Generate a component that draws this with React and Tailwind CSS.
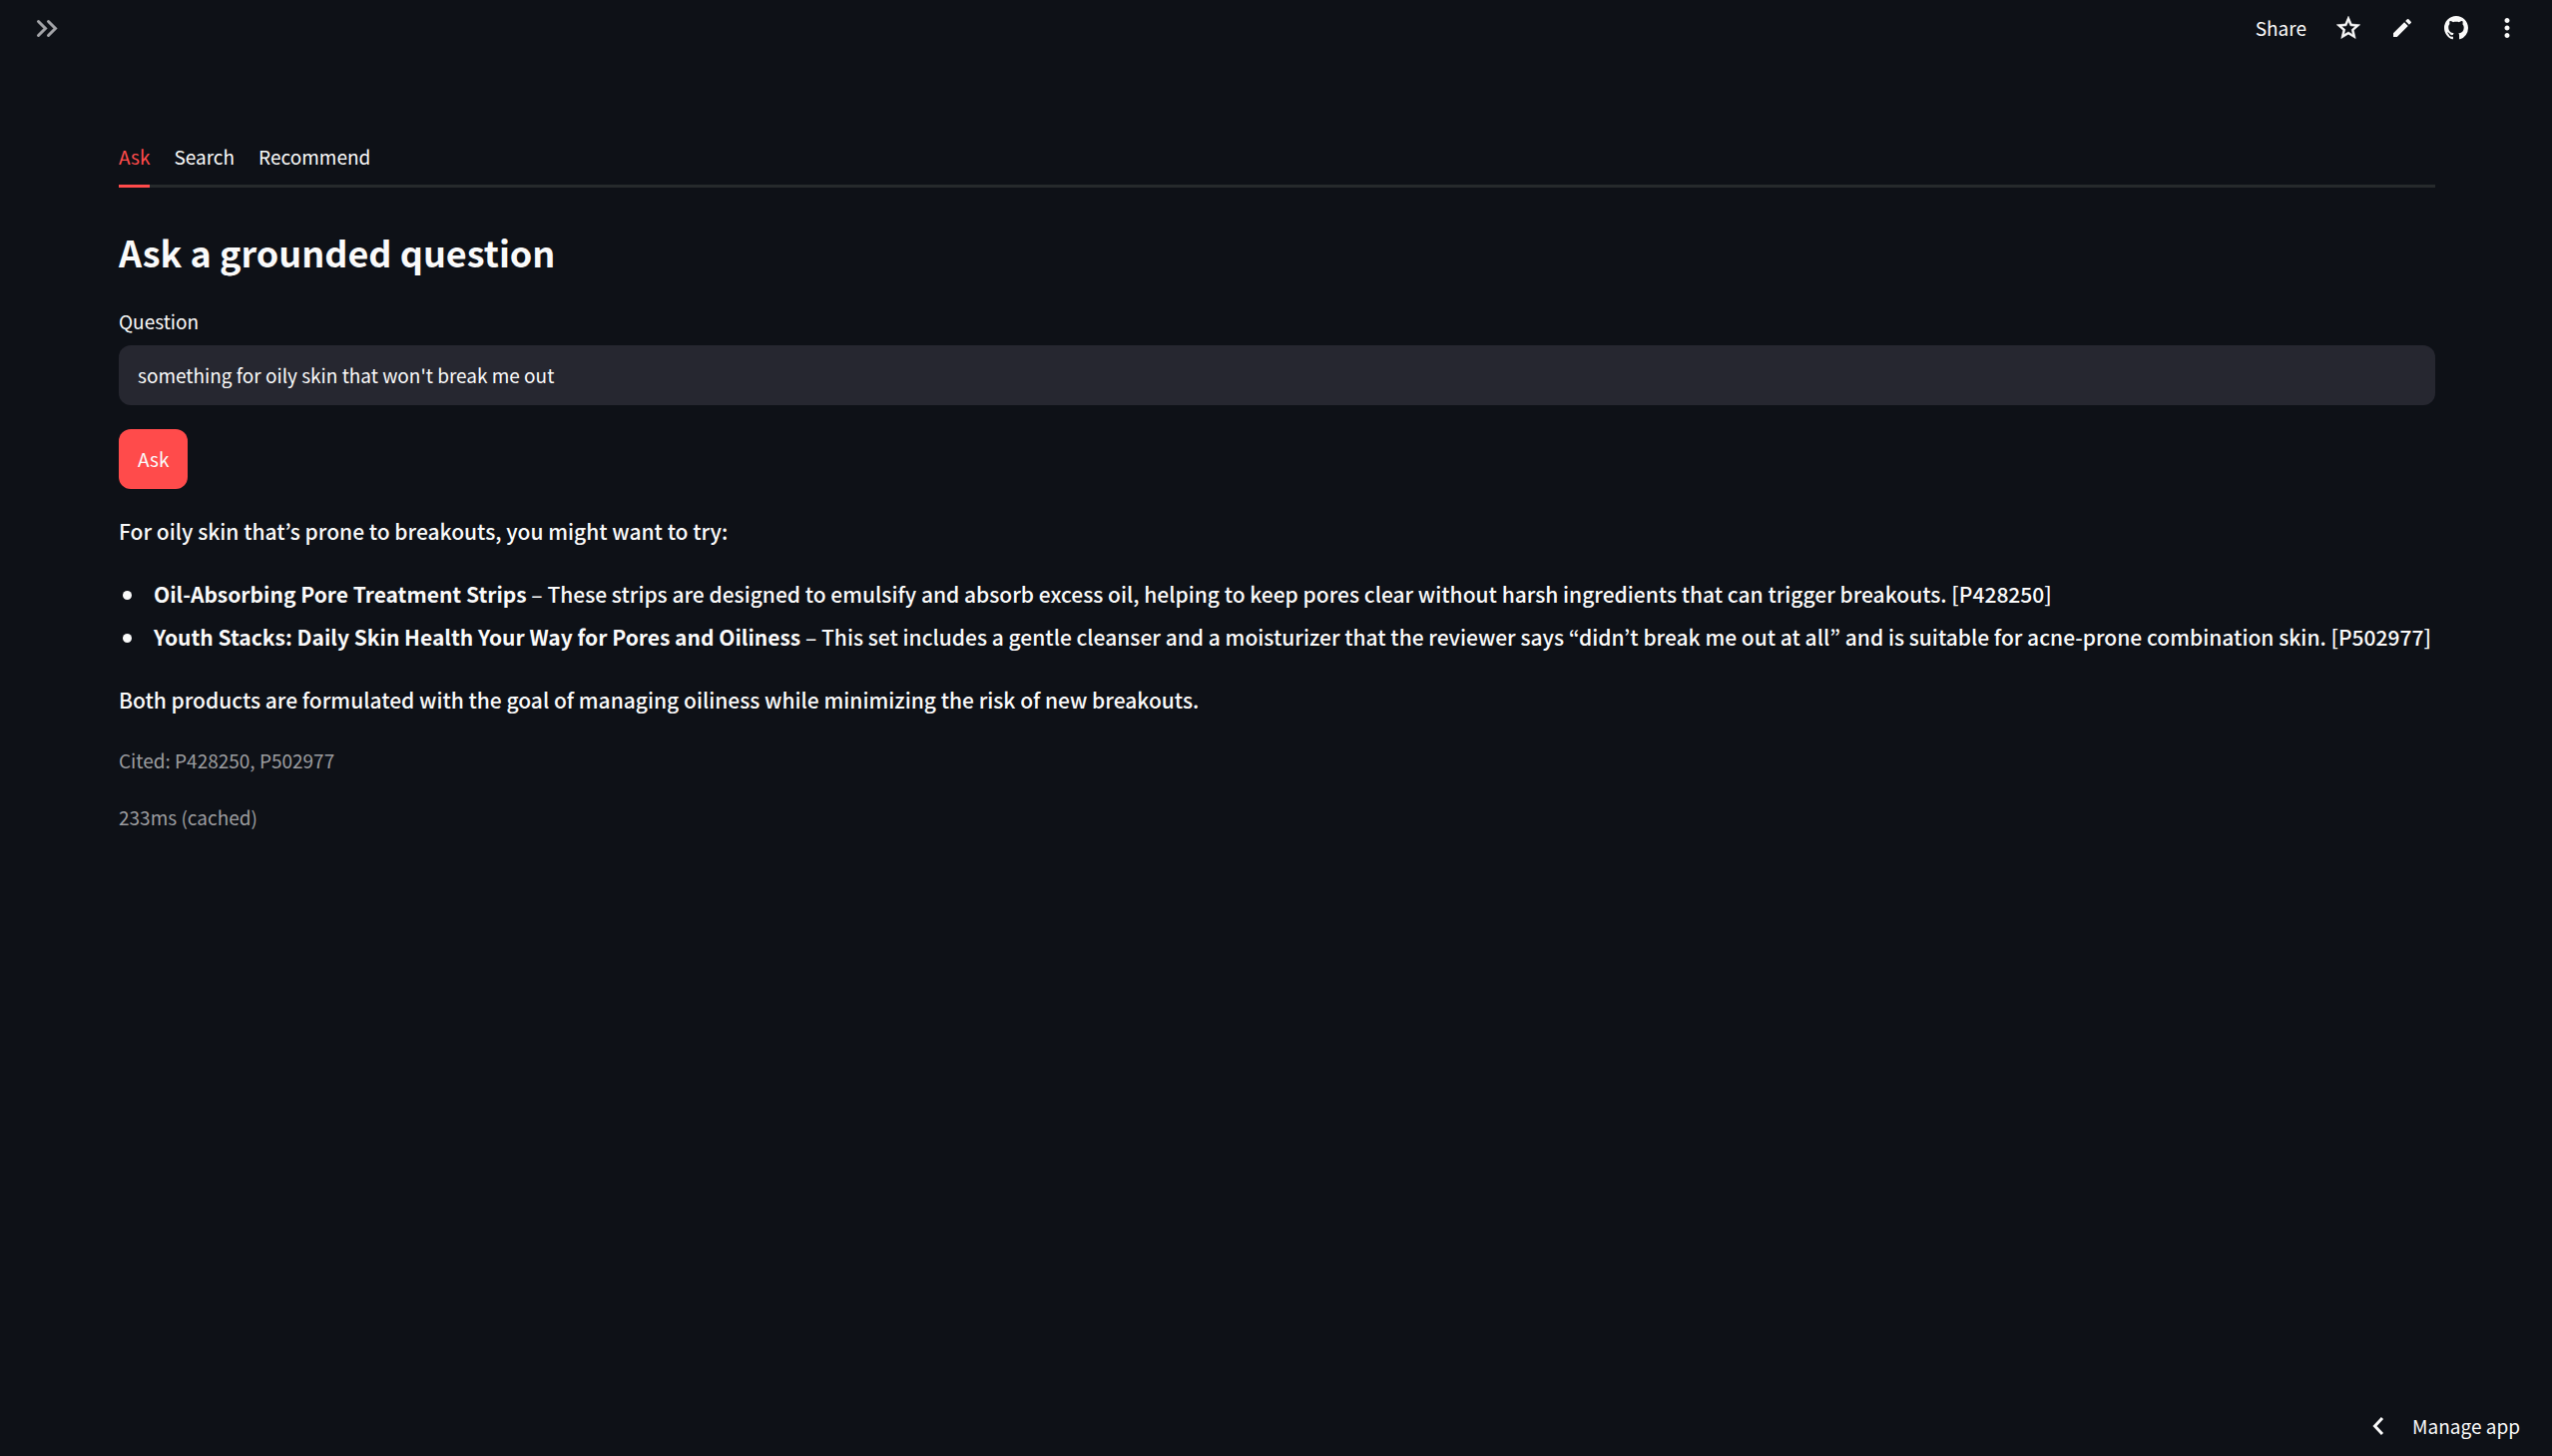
import React, { useState } from 'react';
import { MdEdit, MdMoreVert, MdStarOutline } from 'react-icons/md';
import { VscGithubInverted } from 'react-icons/vsc';

const tabs = ['Ask', 'Search', 'Recommend'];

const products = [
  {
    id: 'P428250',
    name: 'Oil-Absorbing Pore Treatment Strips',
    reason:
      'These strips are designed to emulsify and absorb excess oil, helping to keep pores clear without harsh ingredients that can trigger breakouts.',
  },
  {
    id: 'P502977',
    name: 'Youth Stacks: Daily Skin Health Your Way for Pores and Oiliness',
    reason:
      'This set includes a gentle cleanser and a moisturizer that the reviewer says “didn’t break me out at all” and is suitable for acne-prone combination skin.',
  },
];

const Header = () => (
  <header className="flex h-14 items-center justify-between pl-8 pr-[30px]">
    <button aria-label="Open sidebar" className="text-[#a3a4a8]">
      <svg
        className="h-[30px] w-[30px]"
        viewBox="0 0 30 30"
        fill="none"
        stroke="currentColor"
        strokeWidth="3"
        strokeLinecap="round"
      >
        <path d="M6.500 8.500l7 7-7 7M16.500 8.500l7 7-7 7" />
      </svg>
    </button>

    <div className="flex items-center">
      <button className="mr-7 text-[19px] leading-8">Share</button>
      <button aria-label="Favorite" className="mr-7">
        <MdStarOutline className="h-7 w-7 stroke-current stroke-[0.5]" />
      </button>
      <button aria-label="Edit" className="mr-[30px]">
        <MdEdit className="h-6 w-6" />
      </button>
      <button aria-label="View on GitHub" className="mr-6">
        <VscGithubInverted className="h-6 w-6" />
      </button>
      <button aria-label="Menu">
        <MdMoreVert className="h-[30px] w-[30px]" />
      </button>
    </div>
  </header>
);

const TabBar = ({ active, onChange }) => (
  <div role="tablist" className="flex gap-6 border-b-[3px] border-[#262a2c]">
    {tabs.map((tab) => (
      <button
        key={tab}
        role="tab"
        aria-selected={tab === active}
        onClick={() => onChange(tab)}
        className={`-mb-[3px] h-[63px] border-b-[3px] pt-1 text-[19px] leading-8 ${
          tab === active ? 'border-[#ff4b4b] text-[#ff4b4b]' : 'border-transparent'
        }`}
      >
        {tab}
      </button>
    ))}
  </div>
);

const ProductItem = ({ product }) => (
  <li className="flex before:ml-1 before:mr-[22px] before:mt-4 before:h-[9px] before:w-[9px] before:shrink-0 before:rounded-full before:bg-current before:content-['']">
    <p>
      <strong>{product.name}</strong> – {product.reason} [{product.id}]
    </p>
  </li>
);

export default function App() {
  const [active, setActive] = useState('Ask');
  const [question, setQuestion] = useState("something for oily skin that won't break me out");

  return (
    <div className="flex min-h-screen flex-col bg-[#0e1117] font-['Noto_Sans_CJK_KR',sans-serif] text-[#fafafa]">
      <Header />

      <main className="grow pl-[119px] pr-[117px] pt-[69px]">
        <TabBar active={active} onChange={setActive} />

        <h2 className="mt-[34px] text-[36px] font-bold leading-[60px]">Ask a grounded question</h2>

        <form className="mt-6" onSubmit={(e) => e.preventDefault()}>
          <label htmlFor="question" className="block text-[19px] leading-8">
            Question
          </label>
          <input
            id="question"
            type="text"
            value={question}
            onChange={(e) => setQuestion(e.target.value)}
            className="mt-2 block h-[60px] w-full rounded-xl bg-[#262730] px-[19px] pb-0.5 text-[19px] outline-none"
          />
          <button
            type="submit"
            className="mt-6 h-[60px] rounded-xl bg-[#ff4b4b] px-[19px] text-[19px] leading-8"
          >
            Ask
          </button>
        </form>

        <div className="mt-[23px] text-[21px] font-medium leading-[39px]">
          <p>For oily skin that’s prone to breakouts, you might want to try:</p>
          <ul className="mt-6 space-y-1">
            {products.map((product) => (
              <ProductItem key={product.id} product={product} />
            ))}
          </ul>
          <p className="mt-6">
            Both products are formulated with the goal of managing oiliness while minimizing the risk of new
            breakouts.
          </p>
        </div>

        <div className="mt-6 space-y-6 text-[19px] leading-[33px] text-[#9c9da0]">
          <p>Cited: P428250, P502977</p>
          <p>233ms (cached)</p>
        </div>
      </main>

      <footer className="flex justify-end pb-3 pr-8">
        <button className="flex items-center gap-[22px] text-[19px] leading-9">
          <svg
            className="h-6 w-6"
            viewBox="0 0 24 24"
            fill="none"
            stroke="currentColor"
            strokeWidth="3"
          >
            <path d="M16 4l-7.500 8 7.500 8" />
          </svg>
          Manage app
        </button>
      </footer>
    </div>
  );
}
